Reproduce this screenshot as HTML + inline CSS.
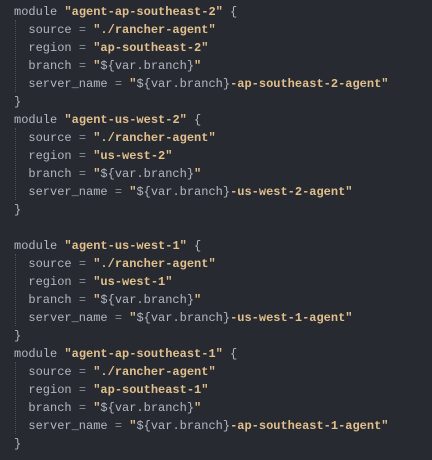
<!DOCTYPE html>
<html><head><style>
html,body{margin:0;padding:0;background:#272a31;width:432px;height:460px;overflow:hidden}
pre{margin:0;position:absolute;left:14px;top:3px;font-family:"Liberation Mono",monospace;font-size:12px;line-height:18px;color:#b3b8c2}
.s{color:#e2c08d;font-weight:bold}
.i{color:#b3b8c2;font-weight:normal}
.e{color:#8a8f98}
.g{position:absolute;left:15px;width:0;border-left:1px dotted #4a4e56}
</style></head><body>
<div class="g" style="top:20px;height:72px"></div>
<div class="g" style="top:128px;height:72px"></div>
<div class="g" style="top:254px;height:72px"></div>
<div class="g" style="top:362px;height:72px"></div>
<pre>module <span class="s">"agent-ap-southeast-2"</span> {
  source <span class="e">=</span> <span class="s">"./rancher-agent"</span>
  region <span class="e">=</span> <span class="s">"ap-southeast-2"</span>
  branch <span class="e">=</span> <span class="s">"<span class="i">${var.branch}</span>"</span>
  server_name <span class="e">=</span> <span class="s">"<span class="i">${var.branch}</span>-ap-southeast-2-agent"</span>
}
module <span class="s">"agent-us-west-2"</span> {
  source <span class="e">=</span> <span class="s">"./rancher-agent"</span>
  region <span class="e">=</span> <span class="s">"us-west-2"</span>
  branch <span class="e">=</span> <span class="s">"<span class="i">${var.branch}</span>"</span>
  server_name <span class="e">=</span> <span class="s">"<span class="i">${var.branch}</span>-us-west-2-agent"</span>
}

module <span class="s">"agent-us-west-1"</span> {
  source <span class="e">=</span> <span class="s">"./rancher-agent"</span>
  region <span class="e">=</span> <span class="s">"us-west-1"</span>
  branch <span class="e">=</span> <span class="s">"<span class="i">${var.branch}</span>"</span>
  server_name <span class="e">=</span> <span class="s">"<span class="i">${var.branch}</span>-us-west-1-agent"</span>
}
module <span class="s">"agent-ap-southeast-1"</span> {
  source <span class="e">=</span> <span class="s">"./rancher-agent"</span>
  region <span class="e">=</span> <span class="s">"ap-southeast-1"</span>
  branch <span class="e">=</span> <span class="s">"<span class="i">${var.branch}</span>"</span>
  server_name <span class="e">=</span> <span class="s">"<span class="i">${var.branch}</span>-ap-southeast-1-agent"</span>
}</pre>
</body></html>
